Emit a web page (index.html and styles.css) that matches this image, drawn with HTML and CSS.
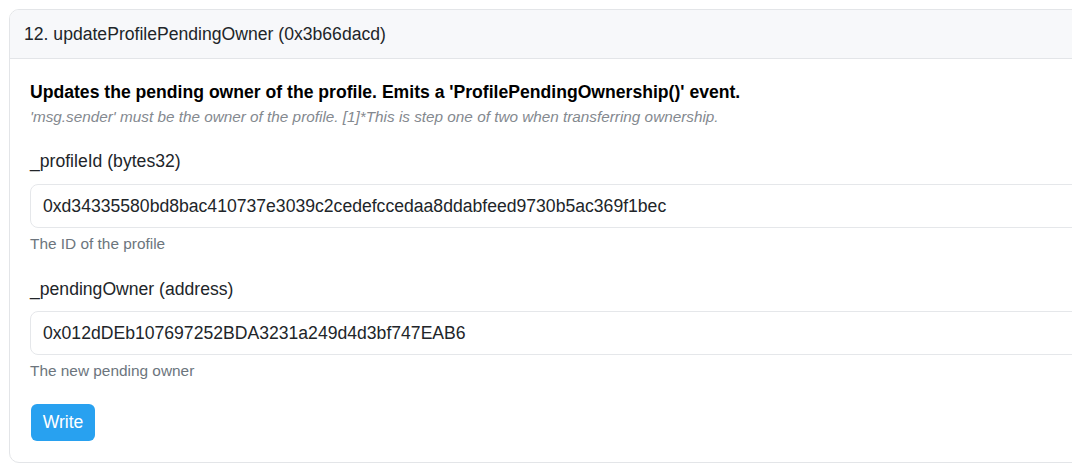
FILE: index.html
```html
<!DOCTYPE html>
<html lang="en">
<head>
<meta charset="utf-8">
<title>updateProfilePendingOwner</title>
<link rel="stylesheet" href="styles.css">
</head>
<body>
<div class="card">
  <div class="card-header">12. updateProfilePendingOwner (0x3b66dacd)</div>
  <div class="card-body">
    <div class="title">Updates the pending owner of the profile. Emits a 'ProfilePendingOwnership()' event.</div>
    <div class="note">'msg.sender' must be the owner of the profile. [1]*This is step one of two when transferring ownership.</div>
    <div class="field">
      <label class="label">_profileId (bytes32)</label>
      <div class="input">0xd34335580bd8bac410737e3039c2cedefccedaa8ddabfeed9730b5ac369f1bec</div>
      <div class="help">The ID of the profile</div>
    </div>
    <div class="field">
      <label class="label">_pendingOwner (address)</label>
      <div class="input">0x012dDEb107697252BDA3231a249d4d3bf747EAB6</div>
      <div class="help">The new pending owner</div>
    </div>
    <button class="btn">Write</button>
  </div>
</div>
</body>
</html>
```
FILE: styles.css
```css
html, body {
  margin: 0;
  padding: 0;
  background: #ffffff;
}
body {
  padding: 9px;
  overflow: hidden;
  font-family: "Liberation Sans", Arial, sans-serif;
  color: #212529;
}
.card {
  width: 1090px;
  border: 1px solid #e3e5e8;
  border-radius: 10px;
  background: #fff;
  overflow: hidden;
}
.card-header {
  background: #f7f8fa;
  border-bottom: 1px solid #e3e5e8;
  padding: 12px 14px;
  font-size: 17.6px;
  line-height: 24px;
  color: #212529;
}
.card-body {
  padding: 21px 20px 21px 20px;
}
.title {
  font-weight: bold;
  font-size: 17.6px;
  line-height: 24px;
  color: #000;
}
.note {
  margin-top: 3px;
  font-style: italic;
  font-size: 15.3px;
  line-height: 20px;
  color: #84898f;
}
.field {
  margin-top: 22px;
}
.field + .field {
  margin-top: 23px;
}
.label {
  display: block;
  font-size: 17.6px;
  line-height: 24px;
  margin-bottom: 11px;
  color: #212529;
}
.field + .field .label {
  margin-bottom: 10px;
}
.input {
  height: 42px;
  border: 1px solid #e5e7ea;
  border-radius: 8px;
  padding: 0 12px;
  font-size: 17.6px;
  line-height: 42px;
  color: #212529;
}
.help {
  margin-top: 5px;
  font-size: 15.4px;
  line-height: 21px;
  color: #6c757d;
}
.btn {
  display: block;
  margin-top: 23px;
  margin-left: 1px;
  width: 64px;
  height: 37px;
  border: none;
  border-radius: 6px;
  background: #28a1f0;
  color: #fff;
  font-family: "Liberation Sans", Arial, sans-serif;
  font-size: 17.6px;
  padding: 0;
}
```
